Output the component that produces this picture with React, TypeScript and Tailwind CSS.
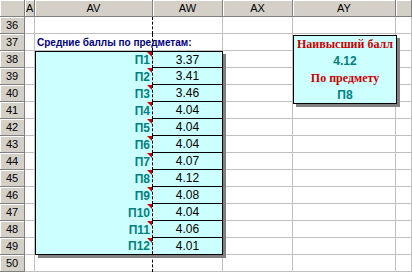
import React from 'react'

const cols = ['AU', 'AV', 'AW', 'AX', 'AY', '']
const rows = [36, 37, 38, 39, 40, 41, 42, 43, 44, 45, 46, 47, 48, 49, 50]
const scores = ['3.37', '3.41', '3.46', '4.04', '4.04', '4.04', '4.07', '4.12', '4.08', '4.04', '4.06', '4.01']

// same template for the sheet layer and the overlay layer
const sheet = 'grid grid-cols-[25px_10px_118px_70px_70px_103px_16px] grid-rows-[17px_repeat(15,17px)]'

const headCell = 'flex items-center bg-[#d4d0c8] border-r border-b border-[#808080] shadow-[inset_1px_1px_0_#ffffff] text-[11px] text-black overflow-hidden'

export default function App() {
    return (
        <div className="w-[412px] h-[274px] overflow-hidden bg-white grid font-['Liberation_Sans',Arial,sans-serif]">
            {/* Sheet grid */}
            <div className={`col-start-1 row-start-1 ${sheet}`}>
                <div className={headCell} />
                {cols.map((c, i) => (
                    <div key={c + i} className={`${headCell} ${i === 0 ? 'justify-start pl-[1px]' : 'justify-center'}`}>
                        {c}
                    </div>
                ))}
                {rows.map((r) => (
                    <React.Fragment key={r}>
                        <div className={`${headCell} justify-center`}>{r}</div>
                        {cols.map((c, i) => (
                            <div
                                key={c + i}
                                className={
                                    i === 1
                                        ? 'border-r border-dashed border-black shadow-[inset_0_-1px_0_#c0c0c0]'
                                        : 'border-r border-b border-[#c0c0c0]'
                                }
                            />
                        ))}
                    </React.Fragment>
                ))}
            </div>

            {/* Content over the sheet */}
            <div className={`col-start-1 row-start-1 ${sheet}`}>
                <div className="col-start-3 row-start-3 flex items-center pl-[2px] whitespace-nowrap text-[10px] font-bold text-[#000080]">
                    Средние баллы по предметам:
                </div>

                <div className="col-start-3 col-end-5 row-start-4 row-end-16 border border-black bg-[#ccffff] shadow-[3px_3px_0_#808080] grid grid-cols-[117px_69px] grid-rows-[16px_repeat(10,17px)_16px]">
                    {scores.map((v, i) => (
                        <React.Fragment key={i}>
                            <div className="relative flex items-center justify-end pr-[2px] border-r border-dashed border-black text-[12px] font-bold text-[#008080]">
                                П{i + 1}
                                <span className="absolute right-0 top-0 size-[5px] bg-[#cc0000] [clip-path:polygon(0_0,100%_0,100%_100%)]" />
                            </div>
                            <div className={`flex items-center justify-center text-[12px] text-black ${i < 11 ? 'border-b border-black' : ''}`}>
                                {v}
                            </div>
                        </React.Fragment>
                    ))}
                </div>

                <div className="col-start-6 row-start-3 row-end-7 mt-[1px] -mb-[2px] -mr-[1px] border border-black bg-[#ccffff] shadow-[3px_3px_0_#808080] grid grid-rows-4 text-center font-bold">
                    <div className="flex items-center justify-center font-['Liberation_Serif',serif] text-[12px] text-[#cc0000] whitespace-nowrap">Наивысший балл</div>
                    <div className="flex items-center justify-center text-[12px] text-[#008080]">4.12</div>
                    <div className="flex items-center justify-center font-['Liberation_Serif',serif] text-[12px] text-[#cc0000]">По предмету</div>
                    <div className="flex items-center justify-center text-[12px] text-[#008080]">П8</div>
                </div>
            </div>
        </div>
    )
}
